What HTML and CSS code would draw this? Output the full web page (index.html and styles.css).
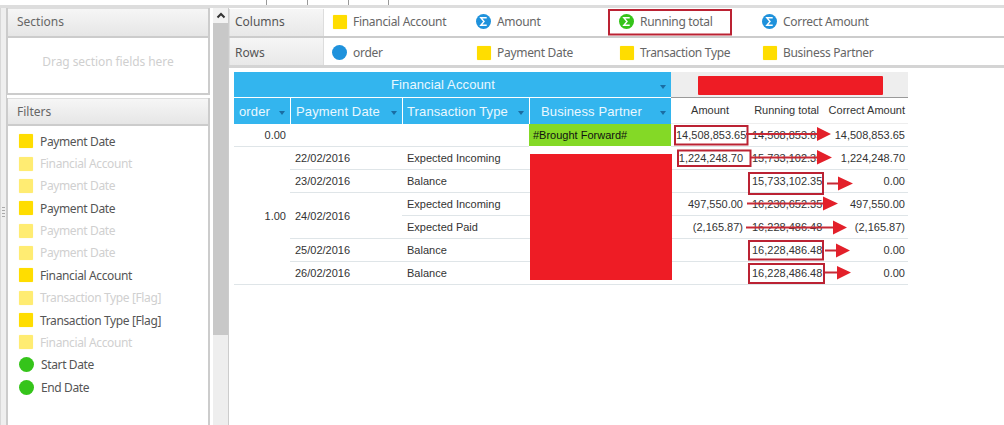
FILE: index.html
```html
<!DOCTYPE html>
<html>
<head>
<meta charset="utf-8">
<title>Report designer</title>
<link rel="stylesheet" href="styles.css">
</head>
<body>
<div class="topstrip">
  <span class="tab"></span><span class="tab"></span><span class="tab"></span>
</div>
<div class="shell">
  <div class="splitter"><span class="grip"></span></div>
  <aside class="side">
    <section class="panel sections">
      <h2 class="panel-head">Sections</h2>
      <div class="drop">Drag section fields here</div>
    </section>
    <section class="panel filters">
      <h2 class="panel-head filters-head">Filters</h2>
      <ul class="filter-list">
        <li class="field"><i class="ico sq"></i>Payment Date</li>
        <li class="field off"><i class="ico sq"></i>Financial Account</li>
        <li class="field off"><i class="ico sq"></i>Payment Date</li>
        <li class="field"><i class="ico sq"></i>Payment Date</li>
        <li class="field off"><i class="ico sq"></i>Payment Date</li>
        <li class="field off"><i class="ico sq"></i>Payment Date</li>
        <li class="field"><i class="ico sq"></i>Financial Account</li>
        <li class="field off"><i class="ico sq"></i>Transaction Type [Flag]</li>
        <li class="field"><i class="ico sq"></i>Transaction Type [Flag]</li>
        <li class="field off"><i class="ico sq"></i>Financial Account</li>
        <li class="field"><i class="ico dot green"></i>Start Date</li>
        <li class="field"><i class="ico dot green"></i>End Date</li>
      </ul>
    </section>
  </aside>
  <div class="scrollbar">
    <div class="scroll-up"><svg width="10" height="7" viewBox="0 0 10 7"><path d="M1.500 5.500 5 2l3.500 3.500" fill="none" stroke="#333" stroke-width="2"/></svg></div>
    <div class="scroll-thumb"></div>
  </div>
  <main class="main">
    <div class="shelf shelf-cols">
      <div class="shelf-label">Columns</div>
      <div class="shelf-items">
        <div class="shelf-item"><i class="ico sq"></i>Financial Account</div>
        <div class="shelf-item"><i class="ico dot blue"><svg class="sigma" viewBox="0 0 14 14"><path d="M10 3.500H4.500L7.500 7l-3 3.500H10" fill="none" stroke="#fff" stroke-width="1.300"/></svg></i>Amount</div>
        <div class="shelf-item"><i class="ico dot green"><svg class="sigma" viewBox="0 0 14 14"><path d="M10 3.500H4.500L7.500 7l-3 3.500H10" fill="none" stroke="#fff" stroke-width="1.300"/></svg></i>Running total</div>
        <div class="shelf-item"><i class="ico dot blue"><svg class="sigma" viewBox="0 0 14 14"><path d="M10 3.500H4.500L7.500 7l-3 3.500H10" fill="none" stroke="#fff" stroke-width="1.300"/></svg></i>Correct Amount</div>
      </div>
    </div>
    <div class="shelf shelf-rows">
      <div class="shelf-label">Rows</div>
      <div class="shelf-items">
        <div class="shelf-item"><i class="ico dot blue"></i>order</div>
        <div class="shelf-item"><i class="ico sq"></i>Payment Date</div>
        <div class="shelf-item"><i class="ico sq"></i>Transaction Type</div>
        <div class="shelf-item"><i class="ico sq"></i>Business Partner</div>
      </div>
    </div>
    <div class="report">
      <table class="grid">
        <colgroup>
          <col class="c-order"><col class="c-date"><col class="c-type"><col class="c-partner"><col class="c-amt"><col class="c-run"><col class="c-cor">
        </colgroup>
        <thead>
          <tr class="head-top">
            <th colspan="4" class="hb h-account">Financial Account<b class="caret"></b></th>
            <th colspan="3" class="hg"></th>
          </tr>
          <tr class="head-sub">
            <th class="hb">order<b class="caret"></b></th>
            <th class="hb">Payment Date<b class="caret"></b></th>
            <th class="hb h-type">Transaction Type<b class="caret"></b></th>
            <th class="hb h-partner">Business Partner<b class="caret"></b></th>
            <th class="hm h-amt">Amount</th>
            <th class="hm h-run">Running total</th>
            <th class="hm h-cor">Correct Amount</th>
          </tr>
        </thead>
        <tbody>
          <tr>
            <td class="num line">0.00</td><td class="line"></td><td class="line"></td>
            <td class="bf">#Brought Forward#</td>
            <td class="num line">14,508,853.65</td><td class="num line">14,508,853.65</td><td class="num line last">14,508,853.65</td>
          </tr>
          <tr>
            <td class="num line" rowspan="6">1.00</td>
            <td class="line">22/02/2016</td><td class="line">Expected Incoming</td><td class="line"></td>
            <td class="num line">1,224,248.70</td><td class="num line">15,733,102.35</td><td class="num line last">1,224,248.70</td>
          </tr>
          <tr>
            <td class="line">23/02/2016</td><td class="line">Balance</td><td class="line"></td>
            <td class="num line"></td><td class="num line">15,733,102.35</td><td class="num line last">0.00</td>
          </tr>
          <tr>
            <td class="line" rowspan="2">24/02/2016</td><td class="line">Expected Incoming</td><td class="line"></td>
            <td class="num line">497,550.00</td><td class="num line">16,230,652.35</td><td class="num line last">497,550.00</td>
          </tr>
          <tr>
            <td class="line">Expected Paid</td><td class="line"></td>
            <td class="num line">(2,165.87)</td><td class="num line">16,228,486.48</td><td class="num line last">(2,165.87)</td>
          </tr>
          <tr>
            <td class="line">25/02/2016</td><td class="line">Balance</td><td class="line"></td>
            <td class="num line"></td><td class="num line">16,228,486.48</td><td class="num line last">0.00</td>
          </tr>
          <tr>
            <td class="line">26/02/2016</td><td class="line">Balance</td><td class="line"></td>
            <td class="num line"></td><td class="num line">16,228,486.48</td><td class="num line last">0.00</td>
          </tr>
        </tbody>
      </table>
    </div>
  </main>
</div>
<svg class="marks" width="1004" height="425" viewBox="0 0 1004 425">
  <rect class="redact" x="698" y="76" width="185" height="19" rx="1"/>
  <rect class="redact" x="530" y="154" width="142" height="126"/>
  <rect class="box" x="609" y="10" width="122" height="24.500"/>
  <rect class="box" x="675" y="126" width="72.500" height="18.500"/>
  <rect class="box" x="678" y="150.500" width="72.500" height="15.500"/>
  <rect class="box" x="749" y="173" width="74" height="21"/>
  <rect class="box" x="749" y="241" width="74" height="18.500"/>
  <rect class="box" x="749" y="264" width="75" height="19"/>
  <path class="shaft" d="M746 134H818M751 157.500H818M827 183.500H839M747 203.500H824M746 227.500H834M825 250.500H837M825 272.500H838"/>
  <path class="head" d="M817 127l14 7-14 7zM817 150l15 7.500-15 7zM838 176.500l15 7-15 7zM823 196.500l15 7-15 7zM833 220.500l14 7-14 7zM836 243.500l14 7-14 7zM837 266l14 6.500-14 7z"/>
</svg>
</body>
</html>
```
FILE: styles.css
```css
* { box-sizing: border-box; }
html, body { margin: 0; padding: 0; height: 100%; overflow: hidden; background: #fff; }
body { font-family: "Noto Sans", "Open Sans", sans-serif; font-size: 12px; color: #555; position: relative; }

.topstrip { height: 8px; display: flex; padding-left: 266px; border-bottom: 3px solid #ddd; background: #fff; }
.tab { width: 41px; height: 5px; border-left: 1px solid #999; }
.tab:last-child { border-right: 1px solid #999; }

.shell { display: flex; height: 417px; }
.splitter { width: 7px; background: #efefef; border-right: 1px solid #ccc; border-left: 1px solid #d8d8d8; position: relative; display: flex; align-items: center; justify-content: center; }
.grip { width: 3px; height: 12px; margin-top: -8px; background: repeating-linear-gradient(#aaa 0 1px, transparent 1px 3px); }

.side { width: 203px; display: flex; flex-direction: column; gap: 3px; }
.panel { border: 1px solid #ccc; border-width: 0 2px 2px 1px; display: flex; flex-direction: column; background: #fff; }
.panel-head { margin: 0; height: 30px; line-height: 25px; padding-left: 9px; font-size: 12px; font-weight: 400; color: #666; background: linear-gradient(#f6f6f6, #e6e6e6); border-bottom: 2px solid #ccc; border-top: 1px solid #ddd; }
.filters-head { height: 28px; line-height: 25px; }
.sections { height: 87px; }
.drop { flex: 1; display: flex; align-items: center; justify-content: center; color: #cfcfcf; letter-spacing: -.08px; padding-bottom: 8px; }
.filters { flex: 1; border-bottom: 0; }
.filter-list { list-style: none; margin: 0; padding: 4px 0 0 11px; }

.field { height: 22.36px; display: flex; align-items: center; gap: 7px; color: #555; letter-spacing: -.37px; }
.field.off { color: #d0d0d0; }
.field.off .ico { opacity: .55; }

.ico { flex: none; display: block; width: 14px; height: 14px; }
.sq { background: #ffdd00; border-radius: 1px; box-shadow: 0 0 1px #ffe866; }
.dot { border-radius: 50%; width: 15px; height: 15px; }
.green { background: #35c41a; }
.blue { background: #1f92dc; }
.sigma { display: block; width: 15px; height: 15px; }

.scrollbar { width: 16px; margin-left: 3px; background: #eee; border-right: 1px solid #ccc; display: flex; flex-direction: column; }
.scroll-up { height: 15px; display: flex; align-items: center; justify-content: center; background: #f2f2f2; }
.scroll-thumb { height: 312px; background: #c8c8c8; }

.main { flex: 1; min-width: 0; display: flex; flex-direction: column; }
.shelf { display: flex; border-bottom: 2px solid #ccc; }
.shelf-cols { height: 29px; margin-top: 1px; }
.shelf-rows { height: 30px; border-bottom: 3px solid #d4d4d4; }
.shelf-label { width: 95px; padding-left: 5px; line-height: 26px; color: #555; background: linear-gradient(#f6f6f6, #e8e8e8); border: 1px solid #ddd; border-width: 0 1px 0 1px; }
.shelf-rows .shelf-label { line-height: 29px; }
.shelf-items { flex: 1; display: grid; grid-template-columns: repeat(4, 143px); padding-left: 9px; align-items: center; }
.shelf-rows .shelf-items { grid-template-columns: 145px 143px 143px 143px; padding-left: 8px; }
.shelf-item { display: flex; align-items: center; gap: 6px; color: #666; letter-spacing: -.3px; }
.shelf-cols .shelf-item { margin-top: -2px; }
.shelf-rows .shelf-item { margin-top: 2px; }

.report { padding: 4px 0 0 5px; }
.grid { width: 674px; table-layout: fixed; border-collapse: separate; border-spacing: 0; font-family: "Liberation Sans", Arial, sans-serif; font-size: 11px; color: #333; }
.c-order { width: 56px; } .c-date { width: 112px; } .c-type { width: 127px; } .c-partner { width: 142px; }
.c-amt { width: 76px; } .c-run { width: 77px; } .c-cor { width: 84px; }
.grid th { font-weight: 400; padding: 0; position: relative; }
.head-top th { height: 26px; }
.head-sub th { height: 26px; }
.hb { background: #33b5ee; color: #eaf8ff; font-size: 13px; letter-spacing: .12px; text-align: left; padding-left: 5px !important; border-left: 1px solid #fff; }
.head-sub .hb { height: 25px; }
.head-top .hb { border-left: 0; border-bottom: 1px solid #fff; }
.head-sub .hb:first-child { border-left: 0; }
.grid .h-account { padding-left: 157px !important; }
.grid .h-type { padding-left: 4px !important; }
.grid .h-partner { padding-left: 11px !important; }
.hg { background: #eee; border-bottom: 1px solid #999; }
.hm { color: #333; font-size: 11px; text-align: right; border-bottom: 1px solid #eee; vertical-align: top; line-height: 24px; }
.grid .h-amt { padding-right: 18px; }
.grid .h-run { padding-right: 5px; }
.grid .h-cor { padding-right: 3px; }
.caret { position: absolute; right: 5px; top: 50%; margin-top: 0; width: 0; height: 0; border: 3.500px solid transparent; border-top: 4px solid #1a6da3; border-bottom: 0; }

.grid td { height: 23px; padding: 0 4px 0 5px; white-space: nowrap; overflow: hidden; }
.grid td.last { padding-right: 3px; }
.line { border-bottom: 1px solid #dfe5e8; }
.num { text-align: right; }
.grid td.bf { background: #84d926; color: #111; padding-left: 4px; border-bottom: 1px solid #fff; }

.marks { position: absolute; left: 0; top: 0; pointer-events: none; }
.redact { fill: #ee1c25; }
.box { fill: none; stroke: #bb2233; stroke-width: 2; }
.shaft { fill: none; stroke: #c72a36; stroke-width: 2; }
.head { fill: #e3202a; }
```
